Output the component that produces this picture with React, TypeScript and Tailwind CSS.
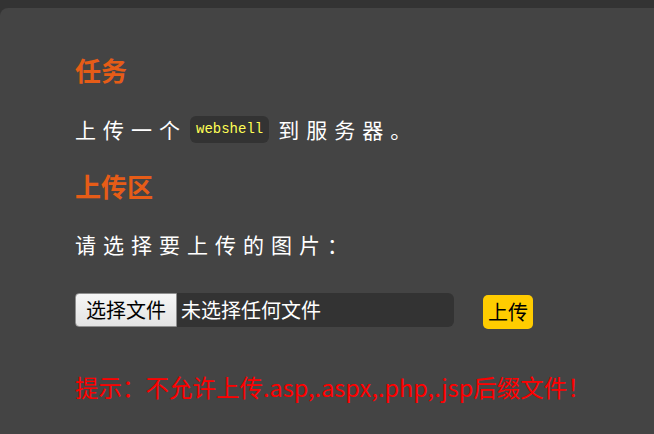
import React from "react";

const cjk = { fontFamily: '"Noto Sans CJK SC", "Noto Sans", sans-serif' };

export default function App() {
  return (
    <div className="min-h-screen bg-[#333] pt-2" style={cjk}>
      <div className="min-h-[426px] rounded-tl-lg bg-[#444] pl-[75px] pt-[46px]">
        <h2 className="h-8 text-[26px] font-bold leading-8 text-[#e65c17]">任务</h2>
        <div className="mt-[29px] flex h-[28px] items-center text-[21px] leading-[28px] text-white">
          <span className="tracking-[7px]">上传一个</span>
          <code
            className="ml-[3px] flex h-[27px] items-center rounded-md bg-[#333] px-[6px] text-[14px] font-normal tracking-normal text-[#ffff55]"
            style={{ fontFamily: '"Liberation Mono", "Courier New", monospace' }}
          >
            webshell
          </code>
          <span className="ml-[9px] tracking-[7px]">到服务器。</span>
        </div>
        <h2 className="mt-[27px] h-8 text-[26px] font-bold leading-8 text-[#e65c17]">上传区</h2>
        <p className="mt-[28px] h-[28px] text-[21px] leading-[28px] tracking-[7px] text-white">请选择要上传的图片：</p>
        <div className="mt-[35px] flex items-start">
          <div className="flex h-[34px] w-[379px] items-stretch rounded-md bg-[#333]">
            <div className="flex items-center rounded-l-[4px] border border-[#8f8f8f] bg-gradient-to-b from-[#f6f6f6] to-[#e3e3e3] px-[10px] text-[20px] text-black">
              选择文件
            </div>
            <div className="flex items-center pl-[4px] text-[20px] text-white">未选择任何文件</div>
          </div>
          <button className="ml-[29px] mt-[2px] flex h-[34px] items-center rounded-[5px] bg-[#ffcc00] px-[5px] text-[20px] text-black">
            上传
          </button>
        </div>
        <p className="mt-[42px] h-8 text-[23.5px] leading-8 text-[#ff0000]">
          提示：不允许上传.asp,.aspx,.php,.jsp后缀文件！
        </p>
      </div>
    </div>
  );
}
